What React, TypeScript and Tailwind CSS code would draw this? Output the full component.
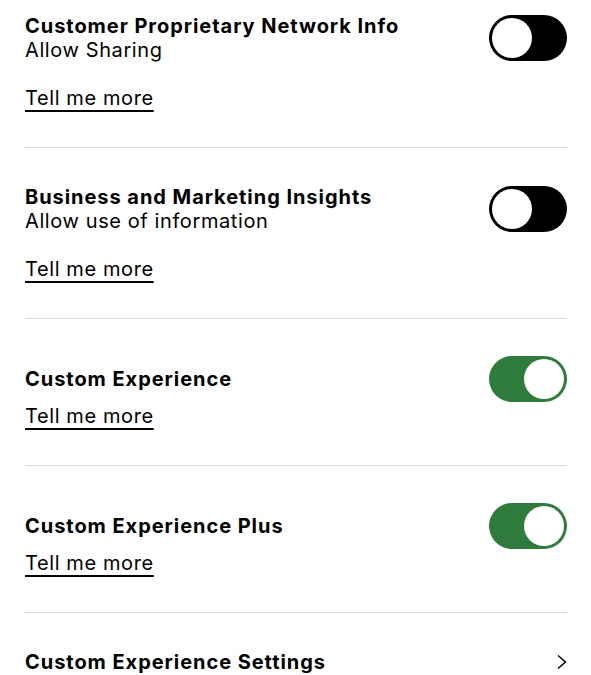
import { useState } from "react";

type Item = {
    title: string;
    sub?: string;
    on: boolean;
};

const items: Item[] = [
    { title: "Customer Proprietary Network Info", sub: "Allow Sharing", on: false },
    { title: "Business and Marketing Insights", sub: "Allow use of information", on: false },
    { title: "Custom Experience", on: true },
    { title: "Custom Experience Plus", on: true },
];

function Toggle({ on, onClick }: { on: boolean; onClick: () => void }) {
    return (
        <button
            onClick={onClick}
            className={`shrink-0 w-[78px] h-[46px] rounded-full flex items-center px-[3px] ${
                on ? "bg-[#2f7b3b] justify-end" : "bg-black justify-start"
            }`}
        >
            <span className="block w-[40px] h-[40px] rounded-full bg-white" />
        </button>
    );
}

export default function App() {
    const [toggles, setToggles] = useState(items.map((i) => i.on));

    function flip(idx: number) {
        setToggles(toggles.map((v, i) => (i === idx ? !v : v)));
    }

    return (
        <div
            className="w-[591px] h-[675px] overflow-hidden bg-white text-black pl-[25px] pr-[24px] text-[20px] leading-[24px] tracking-[0.6px]"
            style={{ fontFamily: "Inter, 'Liberation Sans', sans-serif" }}
        >
            {items.map((item, idx) => (
                <div
                    key={item.title}
                    className={`border-b border-[#d8dada] pb-[37px] ${idx === 0 ? "pt-[14px]" : "pt-[37px]"}`}
                >
                    <div className="flex items-center justify-between">
                        <div>
                            <div className="font-bold tracking-[0.95px]">{item.title}</div>
                            {item.sub && <div>{item.sub}</div>}
                        </div>
                        <Toggle on={toggles[idx]} onClick={() => flip(idx)} />
                    </div>
                    <div className={item.sub ? "mt-[24px]" : "mt-[2px]"}>
                        <a href="#" className="underline decoration-2 underline-offset-[5px]">
                            Tell me more
                        </a>
                    </div>
                </div>
            ))}

            <div className="pt-[37px] flex items-center justify-between">
                <div className="font-bold tracking-[0.95px]">Custom Experience Settings</div>
                <svg width="12" height="16" viewBox="0 0 12 16" fill="none" className="mr-[-1px]">
                    <path d="M2 1.5 L9.5 8 L2 14.5" stroke="black" strokeWidth="1.5" />
                </svg>
            </div>
        </div>
    );
}
